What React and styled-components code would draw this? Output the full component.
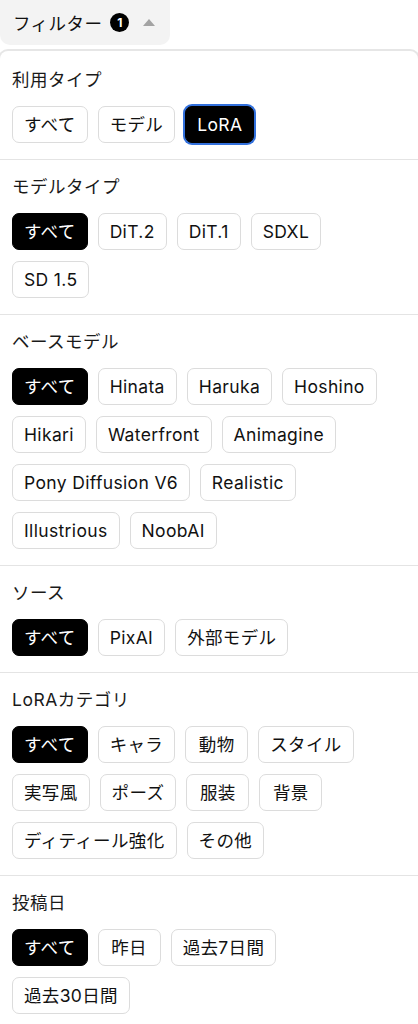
import React from "react";
import styled, { createGlobalStyle } from "styled-components";

const Global = createGlobalStyle`
  html, body { margin: 0; padding: 0; background: #fff; }
  body {
    font-family: "Inter", "Noto Sans CJK JP", sans-serif;
    color: #111;
    -webkit-font-smoothing: antialiased;
  }
  * { box-sizing: border-box; }
`;

const Page = styled.div`
  width: 418px;
  overflow: hidden;
`;

const ToggleButton = styled.button`
  display: flex;
  align-items: center;
  height: 45px;
  margin: 0 0 4px;
  padding: 0 15px 0 13px;
  border: none;
  border-radius: 0 0 10px 10px;
  background: #f3f3f3;
  font-family: inherit;
  font-size: 17.5px;
  letter-spacing: 0.45px;
  color: #111;
  cursor: pointer;
`;

const Badge = styled.span`
  display: inline-flex;
  align-items: center;
  justify-content: center;
  width: 19px;
  height: 19px;
  margin-left: 8px;
  border-radius: 50%;
  background: #000;
  color: #fff;
  font-size: 12px;
  font-weight: 700;
  letter-spacing: 0;
`;

const Caret = styled.svg`
  margin-left: 14px;
  width: 12px;
  height: 7px;
`;

const Panel = styled.div`
  margin: 0 -2px;
  border: 2px solid #e6e6e6;
  border-bottom: none;
  border-radius: 10px 10px 0 0;
  padding: 2px 0 0;
`;

const Section = styled.section`
  padding: 16px 20px 16px 12px;
  border-bottom: 1px solid #e4e4e4;
  &:last-child { border-bottom: none; }
`;

const Label = styled.div`
  font-size: 17.5px;
  line-height: 22px;
  letter-spacing: 0.5px;
  color: #1a1a1a;
  margin-bottom: 15px;
`;

const Chips = styled.div`
  display: flex;
  flex-wrap: wrap;
  gap: 11px 10px;
`;

const Chip = styled.button`
  min-width: 63px;
  height: 37px;
  padding: 0 11px;
  border: 1px solid ${(p) => (p.$active ? "#000" : "#dcdcdc")};
  border-radius: 7px;
  background: ${(p) => (p.$active ? "#000" : "#fff")};
  color: ${(p) => (p.$active ? "#fff" : "#111")};
  font-family: inherit;
  font-size: 17.5px;
  letter-spacing: 0.35px;
  line-height: 1;
  white-space: nowrap;
  cursor: pointer;
  box-shadow: ${(p) => (p.$focus ? "0 0 0 2px #3270dc" : "none")};
`;

const sections = [
  { label: "利用タイプ", items: ["すべて", "モデル", "LoRA"], active: 2, focus: true },
  { label: "モデルタイプ", items: ["すべて", "DiT.2", "DiT.1", "SDXL", "SD 1.5"], active: 0 },
  {
    label: "ベースモデル",
    items: [
      "すべて", "Hinata", "Haruka", "Hoshino", "Hikari", "Waterfront", "Animagine",
      "Pony Diffusion V6", "Realistic", "Illustrious", "NoobAI",
    ],
    active: 0,
  },
  { label: "ソース", items: ["すべて", "PixAI", "外部モデル"], active: 0 },
  {
    label: "LoRAカテゴリ",
    items: ["すべて", "キャラ", "動物", "スタイル", "実写風", "ポーズ", "服装", "背景", "ディティール強化", "その他"],
    active: 0,
  },
  { label: "投稿日", items: ["すべて", "昨日", "過去7日間", "過去30日間"], active: 0 },
];

export default function App() {
  return (
    <Page>
      <Global />
      <ToggleButton>
        フィルター
        <Badge>1</Badge>
        <Caret viewBox="0 0 12 7">
          <polygon points="6,0 12,7 0,7" fill="#a3a3a3" />
        </Caret>
      </ToggleButton>
      <Panel>
        {sections.map((s) => (
          <Section key={s.label}>
            <Label>{s.label}</Label>
            <Chips>
              {s.items.map((it, i) => (
                <Chip key={it} $active={i === s.active} $focus={s.focus && i === s.active}>
                  {it}
                </Chip>
              ))}
            </Chips>
          </Section>
        ))}
      </Panel>
    </Page>
  );
}
